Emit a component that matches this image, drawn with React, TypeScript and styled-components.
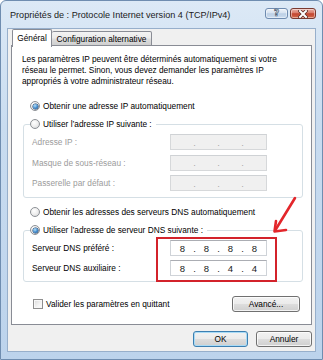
import React from 'react';
import styled, { createGlobalStyle } from 'styled-components';

const GlobalStyle = createGlobalStyle`
  html, body { margin: 0; padding: 0; }
  body {
    width: 323px;
    height: 360px;
    overflow: hidden;
    background: #ffffff;
    font-family: "Liberation Sans", Arial, sans-serif;
  }
  * { box-sizing: border-box; }
`;

const BODY_FONT = '8.3px';

const Window = styled.div`
  position: relative;
  width: 323px;
  height: 360px;
  display: flex;
  flex-direction: column;
  padding: 0 6px 7px 6px;
  background: linear-gradient(180deg, #dce9f6 0%, #c9dcf0 35%, #bcd3ec 100%);
  border: 1px solid #6f8db0;
  border-radius: 6px 6px 0 0;
`;

const TitleBar = styled.div`
  height: 27px;
  display: flex;
  align-items: center;
  padding-left: 3px;
`;

const Title = styled.div`
  font-size: 9.1px;
  color: #1b1b1b;
  white-space: nowrap;
`;

const Controls = styled.div`
  margin-left: auto;
  align-self: flex-start;
  margin-top: 7px;
  display: flex;
  gap: 2px;
`;

const CaptionButton = styled.div<{ $close?: boolean }>`
  width: ${p => (p.$close ? '26px' : '23px')};
  height: 11px;
  border: 1px solid ${p => (p.$close ? '#7a3a30' : '#6e8bb0')};
  border-radius: 3px;
  background: ${p =>
    p.$close
      ? 'linear-gradient(180deg, #eab0a6 0%, #d97b68 45%, #c2452f 52%, #d3694b 100%)'
      : 'linear-gradient(180deg, #eef3f9 0%, #d6e2f0 45%, #bccfe5 52%, #cbdcef 100%)'};
  box-shadow: inset 0 0 0 1px rgba(255, 255, 255, 0.45);
  display: flex;
  align-items: center;
  justify-content: center;
`;

const HelpGlyph = styled.span`
  font-family: "DejaVu Sans", sans-serif;
  font-weight: bold;
  font-size: 9px;
  line-height: 9px;
  color: #ffffff;
  -webkit-text-stroke: 0.7px #44586f;
`;

const Client = styled.div`
  flex: 1;
  display: flex;
  flex-direction: column;
  background: #f0f0f0;
  border: 1px solid #97afcb;
  padding: 0 3px;
`;

const Tabs = styled.div`
  display: flex;
  align-items: flex-end;
  height: 17px;
  position: relative;
  z-index: 1;
  margin-bottom: -1px;
`;

const Tab = styled.div<{ $active?: boolean; $w: number }>`
  width: ${p => p.$w}px;
  height: ${p => (p.$active ? '18px' : '15px')};
  margin-left: ${p => (p.$active ? '1px' : '0')};
  align-self: ${p => (p.$active ? 'flex-start' : 'flex-end')};
  border: 1px solid #898c95;
  border-bottom: ${p => (p.$active ? 'none' : '1px solid #898c95')};
  border-left: ${p => (p.$active ? '1px solid #898c95' : 'none')};
  border-radius: 2px 2px 0 0;
  background: ${p =>
    p.$active
      ? '#ffffff'
      : 'linear-gradient(180deg, #f3f3f3 0%, #ebebeb 45%, #dddddd 55%, #cfcfcf 100%)'};
  font-size: ${BODY_FONT};
  color: #000;
  display: flex;
  align-items: center;
  justify-content: center;
  padding-bottom: ${p => (p.$active ? '1px' : '0')};
  white-space: nowrap;
`;

const Panel = styled.div`
  height: 280px;
  background: #ffffff;
  border: 1px solid #898c95;
  display: flex;
  flex-direction: column;
  padding-top: 8px;
  font-size: ${BODY_FONT};
  color: #000;
`;

const Intro = styled.p`
  margin: 0 0 0 10px;
  line-height: 11px;
  white-space: nowrap;
`;

const OptionRow = styled.label<{ $top: number }>`
  display: flex;
  align-items: center;
  gap: 3px;
  height: 14px;
  margin: ${p => p.$top}px 0 0 18px;
  white-space: nowrap;
`;

const Radio = styled.span<{ $checked?: boolean }>`
  flex: none;
  width: 10px;
  height: 10px;
  border-radius: 50%;
  border: 1px solid #8d9196;
  background: radial-gradient(circle at 40% 35%, #ffffff 0%, #ececec 55%, #cdcfd2 100%);
  display: inline-flex;
  align-items: center;
  justify-content: center;

  &::after {
    content: '';
    display: ${p => (p.$checked ? 'block' : 'none')};
    width: 5px;
    height: 5px;
    border-radius: 50%;
    background: radial-gradient(circle at 40% 35%, #b5e1fb 0%, #3d86c8 55%, #174f91 100%);
    box-shadow: 0 0 0 0.5px #1d3f66;
  }
`;

const GroupBox = styled.fieldset<{ $top: number; $bottom: number }>`
  margin: ${p => p.$top}px 8px 0 11px;
  padding: 0 0 ${p => p.$bottom}px 8px;
  border: 1px solid #d5dfe5;
  border-radius: 3px;
  min-width: 0;
`;

const Legend = styled.legend`
  margin-left: -2px;
  padding: 0 4px 0 0;
  display: flex;
  align-items: center;
  gap: 3px;
  height: 14px;
  white-space: nowrap;
`;

const Fields = styled.div<{ $gap: number }>`
  display: flex;
  flex-direction: column;
  gap: ${p => p.$gap}px;
  margin-top: 3px;
`;

const FieldRow = styled.div<{ $h: number }>`
  display: flex;
  align-items: center;
  height: ${p => p.$h}px;
`;

const FieldLabel = styled.span<{ $disabled?: boolean }>`
  width: 138px;
  color: ${p => (p.$disabled ? '#9b9b9b' : '#000')};
  white-space: nowrap;
`;

const IpBox = styled.div<{ $disabled?: boolean }>`
  width: 97px;
  height: 100%;
  display: flex;
  align-items: center;
  padding-left: 1px;
  border: 1px solid ${p => (p.$disabled ? '#d6d8da' : '#cfd3d8')};
  border-top-color: ${p => (p.$disabled ? '#cfd2d5' : '#abadb3')};
  background: ${p => (p.$disabled ? '#f0f0f0' : '#ffffff')};
  color: ${p => (p.$disabled ? '#a8a8a8' : '#1a1a1a')};
  font-size: 9.5px;
`;

const Segment = styled.span`
  width: 21px;
  text-align: center;
`;

const Dot = styled.span`
  width: 3px;
  text-align: center;
`;

const BottomRow = styled.div`
  display: flex;
  align-items: center;
  height: 16px;
  margin: 14px 11px 0 21px;
`;

const Check = styled.span`
  flex: none;
  width: 10px;
  height: 10px;
  border: 1px solid #8f8f8f;
  background: linear-gradient(135deg, #d9d9d9 0%, #f4f4f4 60%, #ffffff 100%);
  box-shadow: inset 0 0 0 1px #f7f7f7;
  margin-right: 3px;
`;

const Button = styled.button<{ $default?: boolean; $w: number }>`
  width: ${p => p.$w}px;
  height: 16px;
  padding: 0;
  font-family: inherit;
  font-size: ${BODY_FONT};
  color: #000;
  border: 1px solid ${p => (p.$default ? '#3c7fb1' : '#707070')};
  border-radius: 3px;
  background: linear-gradient(180deg, #f2f2f2 0%, #ebebeb 48%, #dddddd 52%, #cfcfcf 100%);
  box-shadow: inset 0 0 0 1px ${p => (p.$default ? '#a9dbf6' : 'rgba(255, 255, 255, 0.75)')};
`;

const Spacer = styled.div`
  flex: 1;
`;

const Footer = styled.div`
  display: flex;
  justify-content: flex-end;
  gap: 8px;
  padding-top: 6px;
`;

const Highlight = styled.div`
  position: absolute;
  left: 155px;
  top: 236px;
  width: 121px;
  height: 45px;
  border: 2px solid #d3232b;
  pointer-events: none;
`;

const Arrow = styled.svg`
  position: absolute;
  left: 265px;
  top: 191px;
  pointer-events: none;
`;

const Ip = ({ parts, disabled }: { parts: string[]; disabled?: boolean }) => (
  <IpBox $disabled={disabled}>
    {parts.map((p, i) => (
      <React.Fragment key={i}>
        <Segment>{p}</Segment>
        {i < 3 && <Dot>.</Dot>}
      </React.Fragment>
    ))}
  </IpBox>
);

const empty = ['', '', '', ''];

export default function App() {
  return (
    <>
      <GlobalStyle />
      <Window>
        <TitleBar>
          <Title>Propriétés de : Protocole Internet version 4 (TCP/IPv4)</Title>
          <Controls>
            <CaptionButton>
              <HelpGlyph>?</HelpGlyph>
            </CaptionButton>
            <CaptionButton $close>
              <svg width="10" height="8" viewBox="0 0 10 8">
                <path d="M2 1 L8 7 M8 1 L2 7" stroke="#5a2a24" strokeWidth="3.4" strokeLinecap="square" />
                <path d="M2 1 L8 7 M8 1 L2 7" stroke="#ffffff" strokeWidth="2" strokeLinecap="square" />
              </svg>
            </CaptionButton>
          </Controls>
        </TitleBar>

        <Client>
          <Tabs>
            <Tab $active $w={40}>Général</Tab>
            <Tab $w={100}>Configuration alternative</Tab>
          </Tabs>

          <Panel>
            <Intro>
              Les paramètres IP peuvent être déterminés automatiquement si votre
              <br />
              réseau le permet. Sinon, vous devez demander les paramètres IP
              <br />
              appropriés à votre administrateur réseau.
            </Intro>

            <OptionRow $top={12}>
              <Radio $checked />
              Obtenir une adresse IP automatiquement
            </OptionRow>

            <GroupBox $top={4} $bottom={6}>
              <Legend>
                <Radio />
                Utiliser l’adresse IP suivante :
              </Legend>
              <Fields $gap={4.5}>
                <FieldRow $h={16}>
                  <FieldLabel $disabled>Adresse IP :</FieldLabel>
                  <Ip parts={empty} disabled />
                </FieldRow>
                <FieldRow $h={16}>
                  <FieldLabel $disabled>Masque de sous-réseau :</FieldLabel>
                  <Ip parts={empty} disabled />
                </FieldRow>
                <FieldRow $h={16}>
                  <FieldLabel $disabled>Passerelle par défaut :</FieldLabel>
                  <Ip parts={empty} disabled />
                </FieldRow>
              </Fields>
            </GroupBox>

            <OptionRow $top={7}>
              <Radio />
              Obtenir les adresses des serveurs DNS automatiquement
            </OptionRow>

            <GroupBox $top={4} $bottom={5}>
              <Legend>
                <Radio $checked />
                Utiliser l’adresse de serveur DNS suivante :
              </Legend>
              <Fields $gap={4}>
                <FieldRow $h={16}>
                  <FieldLabel>Serveur DNS préféré :</FieldLabel>
                  <Ip parts={['8', '8', '8', '8']} />
                </FieldRow>
                <FieldRow $h={16}>
                  <FieldLabel>Serveur DNS auxiliaire :</FieldLabel>
                  <Ip parts={['8', '8', '4', '4']} />
                </FieldRow>
              </Fields>
            </GroupBox>

            <BottomRow>
              <Check />
              Valider les paramètres en quittant
              <Spacer />
              <Button $w={68}>Avancé...</Button>
            </BottomRow>
          </Panel>

          <Footer>
            <Button $default $w={55}>OK</Button>
            <Button $w={56}>Annuler</Button>
          </Footer>
        </Client>

        <Highlight />
        <Arrow width="34" height="44" viewBox="0 0 34 44">
          <path d="M29 6 L10 37" stroke="#e3262b" strokeWidth="2.6" strokeLinecap="round" fill="none" />
          <path d="M10 29 L8.5 39.5 L20 38" stroke="#e3262b" strokeWidth="2.6" strokeLinecap="round" strokeLinejoin="round" fill="none" />
        </Arrow>
      </Window>
    </>
  );
}
